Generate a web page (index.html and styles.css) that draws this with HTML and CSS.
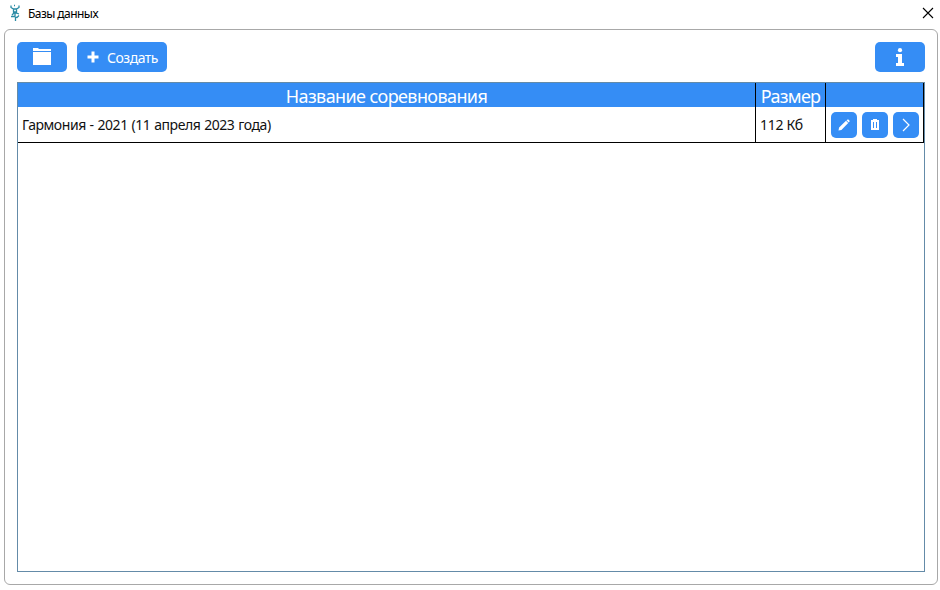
FILE: index.html
```html
<!DOCTYPE html>
<html lang="ru">
<head>
<meta charset="utf-8">
<title>Базы данных</title>
<link rel="stylesheet" href="styles.css">
</head>
<body>
<div class="window">
  <header class="titlebar">
    <svg class="app-icon" width="12" height="18" viewBox="0 0 12 18" fill="none" stroke="#2b8ba5" stroke-width="1.3"><path d="M2 1.500v2l2.500 1.500h3L10 3.500v-2M4.500 5v3h3V5M5 1.500h1M3 11l2-2h2l3 1M2 12.500h3l3 1 2-2M6 9v3M6.500 13v4"/></svg>
    <span class="title">Базы данных</span>
    <svg class="close" width="12" height="12" viewBox="0 0 12 12" stroke="#000" stroke-width="1.1"><path d="M1 1l10 10M11 1L1 11"/></svg>
  </header>
  <main class="panel">
    <div class="toolbar">
      <button class="btn folder" aria-label="Папка"><svg width="20" height="18" viewBox="0 0 20 18" fill="#fff"><path d="M1 0h5l1 1h12v2H1zM1 4h18v13H1z"/></svg></button>
      <button class="btn create"><svg width="12" height="12" viewBox="0 0 12 12" fill="#fff"><path d="M4.500 .5h3v4h4v3h-4v4h-3v-4h-4v-3h4z"/></svg><span class="create-text">Создать</span></button>
      <button class="btn info" aria-label="Информация"><svg width="10" height="18" viewBox="0 0 10 18" fill="#fff"><circle cx="5" cy="2.200" r="2.100"/><path d="M1 6h6v9h2v3H1v-3h2V9H1z"/></svg></button>
    </div>
    <div class="table">
      <div class="row head">
        <div class="cell"><span class="name-head">Название соревнования</span></div>
        <div class="cell"><span class="size-head">Размер</span></div>
        <div class="cell"></div>
      </div>
      <div class="row data">
        <div class="cell"><span class="name">Гармония - 2021 (11 апреля 2023 года)</span></div>
        <div class="cell"><span class="size">112 Кб</span></div>
        <div class="cell actions">
          <button class="btn small" aria-label="Изменить"><svg width="12" height="12" viewBox="0 0 12 12" fill="#fff"><path d="M.5 11.500l.6-3L8 1.800l2.200 2.200L3.400 10.900zM8.500 1.300L9.600.5h.8l1.200 1.200v.7l-.9 1.100z"/></svg></button>
          <button class="btn small" aria-label="Удалить"><svg width="10" height="12" viewBox="0 0 10 12" fill="#fff"><path fill-rule="evenodd" d="M1 1h2V0h4v1h2v10H1zM3 3v6h1V3zM6 3v6h1V3z"/></svg></button>
          <button class="btn small" aria-label="Открыть"><svg width="10" height="14" viewBox="0 0 10 14" fill="none" stroke="#fff" stroke-width="1.200"><path d="M2 1l6 6-6 6"/></svg></button>
        </div>
      </div>
    </div>
  </main>
</div>
</body>
</html>
```
FILE: styles.css
```css
* { box-sizing: border-box; }
body { margin: 0; background: #fff; color: #111; font-family: "Noto Sans", "Open Sans", sans-serif; }
.window { width: 940px; height: 590px; padding: 0 2px 5px 4px; display: flex; flex-direction: column; }
.titlebar { height: 29px; flex: none; display: flex; align-items: center; padding: 0 4px 3px 5px; }
.title { margin-left: 7px; padding-top: 1px; font-size: 12px; letter-spacing: -0.55px; color: #000; white-space: nowrap; }
.close { margin-left: auto; }
.panel { flex: 1; border: 1px solid #a8a8a8; border-radius: 6px; padding: 12px; display: flex; flex-direction: column; gap: 10px; }
.toolbar { display: flex; gap: 10px; height: 30px; }
.btn { border: 0; padding: 0; background: #358df5; color: #fff; border-radius: 5px; display: flex; align-items: center; justify-content: center; font-family: inherit; }
.folder, .info { width: 50px; }
.info { margin-left: auto; }
.create { width: 90px; gap: 8px; padding-left: 1px; font-size: 14px; }
.create-text { letter-spacing: -0.5px; padding-top: 1px; }
.table { flex: 1; border: 1px solid #648ba8; }
.row { display: grid; grid-template-columns: 738px 70px 98px; }
.cell { border-right: 1px solid #000; display: flex; align-items: center; white-space: nowrap; }
.head { height: 24px; background: #358df5; color: #fff; font-size: 18px; line-height: 24px; }
.head .cell { justify-content: center; }
.data { height: 36px; border-bottom: 1px solid #000; font-size: 14px; }
.data .cell { padding-left: 4px; }
.name-head { letter-spacing: -0.6px; padding-top: 1px; }
.size-head { letter-spacing: -0.7px; padding-top: 1px; }
.name { letter-spacing: -0.44px; word-spacing: 0.6px; }
.size { letter-spacing: -0.3px; }
.data .actions { gap: 5px; padding-left: 5px; }
.small { width: 26px; height: 26px; }
```
